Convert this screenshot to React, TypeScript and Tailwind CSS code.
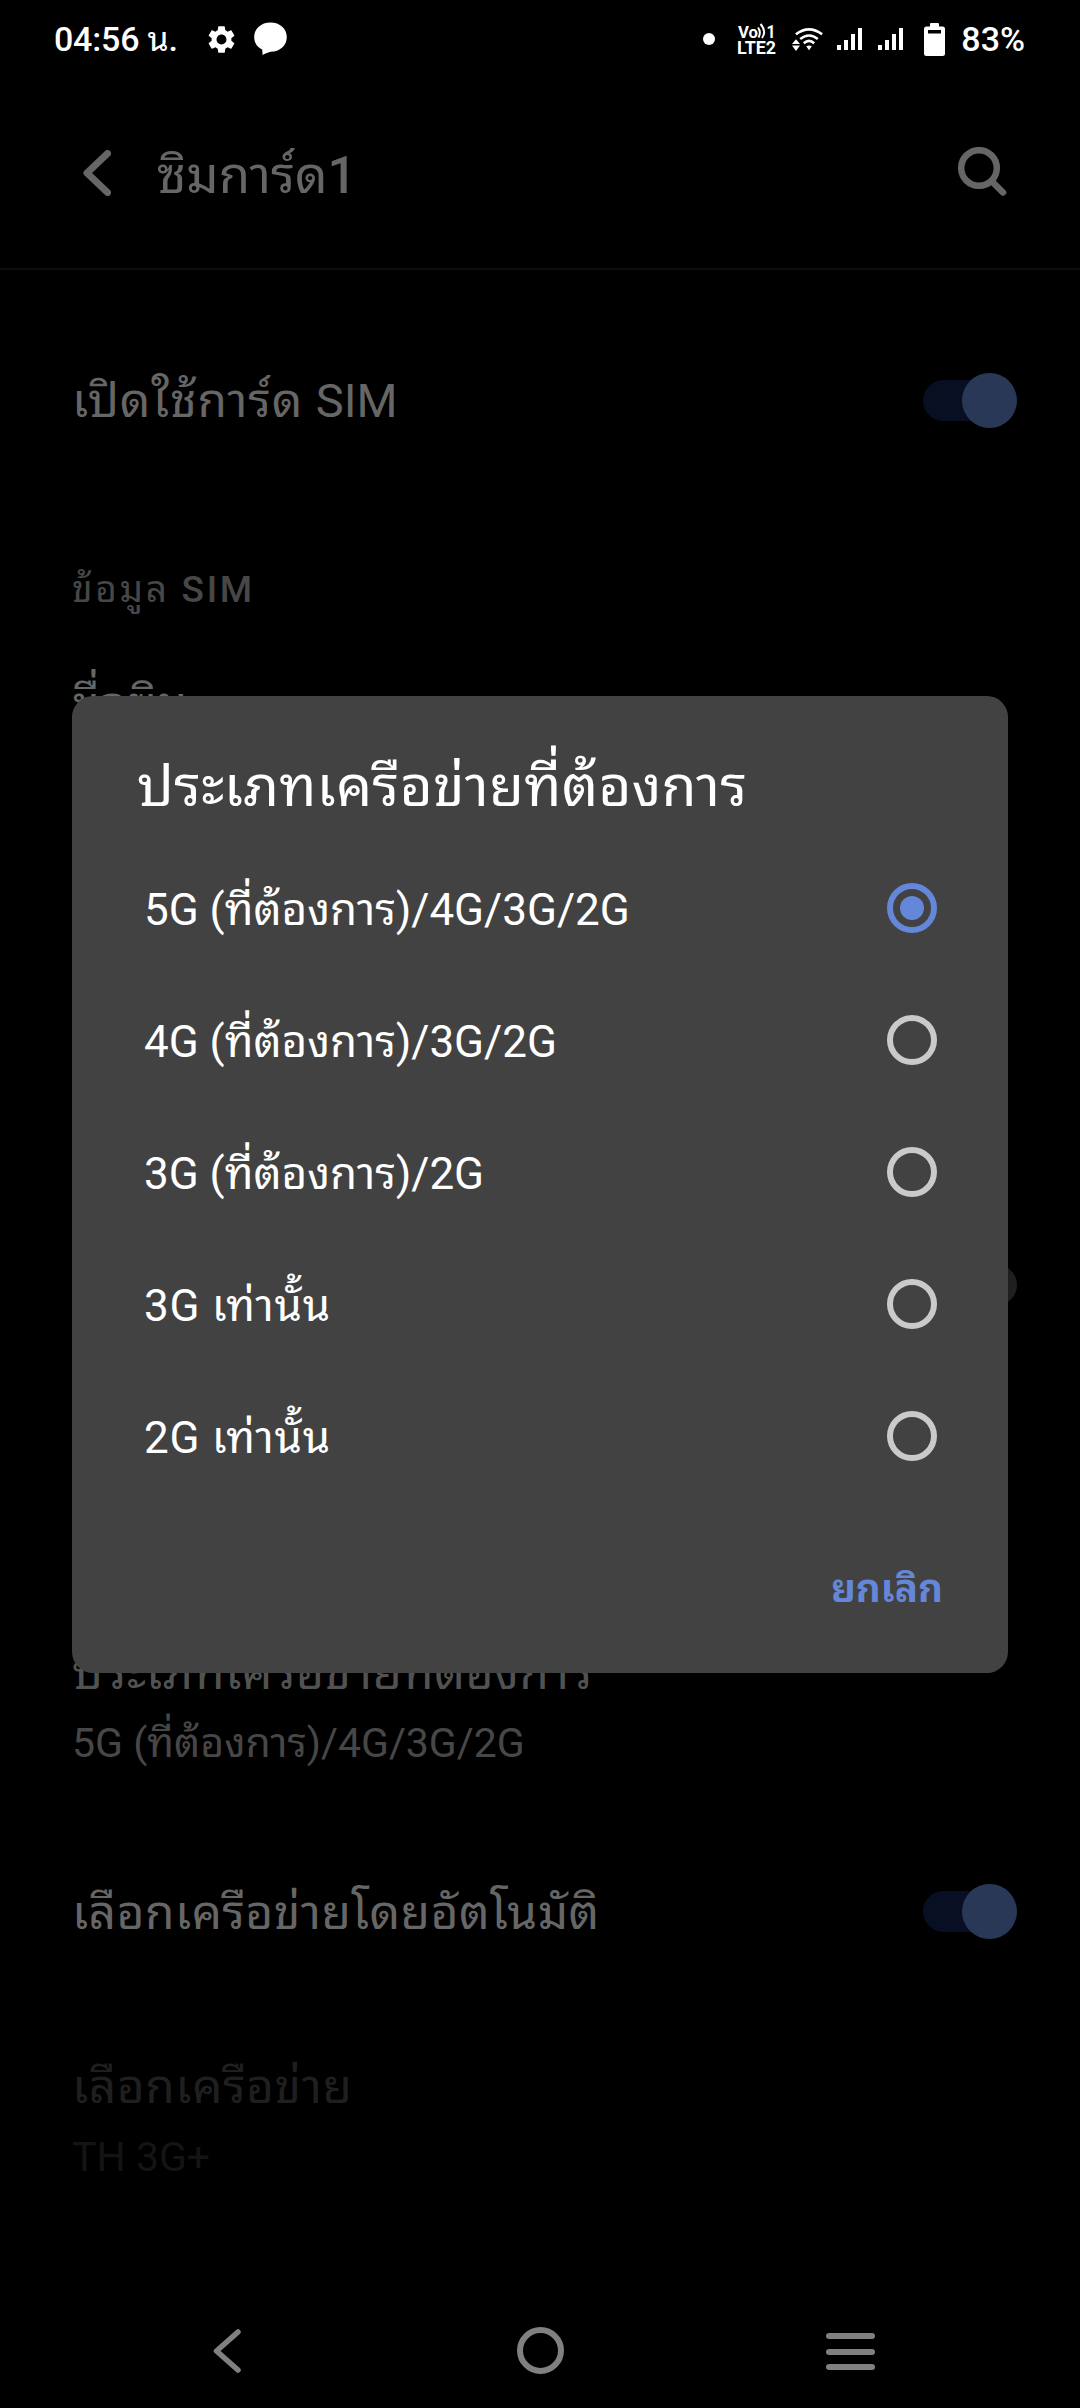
import type { ReactNode } from "react";
import { MdSettings } from "react-icons/md";

function SignalBars({ className }: { className: string }) {
  return (
    <svg width="25" height="22" viewBox="0 0 25 22" fill="white" className={className}>
      <rect x="0" y="17" width="4" height="5" />
      <rect x="7" y="12" width="4" height="10" />
      <rect x="14" y="6" width="4" height="16" />
      <rect x="21" y="0" width="4" height="22" />
    </svg>
  );
}

function VolteIcon({ className }: { className: string }) {
  return (
    <svg
      width="40"
      height="38"
      viewBox="0 0 40 38"
      fill="white"
      className={className}
      fontFamily="Roboto, sans-serif"
      fontWeight="700"
    >
      <text x="1" y="18" fontSize="16.5" textLength="20" lengthAdjust="spacingAndGlyphs">
        Vo
      </text>
      <path
        d="M21 7.5 Q24.5 12 21.5 17.5 M23.5 4 Q30 11 25 18"
        stroke="white"
        strokeWidth="2"
        fill="none"
      />
      <text x="29.5" y="18" fontSize="18" textLength="9" lengthAdjust="spacingAndGlyphs">
        1
      </text>
      <text x="0" y="34" fontSize="18" textLength="39" lengthAdjust="spacingAndGlyphs">
        LTE2
      </text>
    </svg>
  );
}

function WifiIcon({ className }: { className: string }) {
  return (
    <svg width="32" height="26" viewBox="0 0 32 26" fill="none" className={className}>
      <g stroke="white" strokeWidth="2.6">
        <path d="M4.9 8.2 Q18 -1.5 31.1 8.2" />
        <path d="M9.2 13 Q18 6 26.8 13" />
        <path d="M12.8 17.2 Q18 12.6 23.2 17.2" />
      </g>
      <path d="M15.2 20.2 Q18 18.6 20.8 20.2 L18 24.2Z" fill="white" />
      <path d="M1 18 L5 13.2 L9 18Z M1 19.6 H9 L5 25Z" fill="white" />
    </svg>
  );
}

function StatusBar() {
  return (
    <div className="flex h-[78px] shrink-0 items-center pl-[54px] pr-[55px] text-[34px] font-medium leading-none text-white">
      <div className="whitespace-pre tracking-[-0.2px]">
        04:56 <span className="font-normal">น</span>.
      </div>
      <MdSettings className="ml-[27px] size-[33px]" />
      <svg width="33" height="34" viewBox="0 0 33 34" fill="white" className="ml-[16px]">
        <path d="M16.5 0.5 C26 0.5 32.8 6.8 32.8 15 C32.8 23.5 26 29.8 16.5 29.8 C13.5 31 11 31.8 8.6 33 L8.2 27.5 C3 25 0.2 20.5 0.2 15 C0.2 6.8 7 0.5 16.5 0.5Z" />
      </svg>
      <span className="ml-auto size-3 rounded-full bg-white" />
      <VolteIcon className="ml-[22px]" />
      <WifiIcon className="ml-[14px]" />
      <SignalBars className="ml-[14px]" />
      <SignalBars className="ml-[16px]" />
      <svg width="21" height="33" viewBox="0 0 21 33" className="ml-[21px]">
        <rect x="6" y="0" width="9" height="5" rx="1" fill="white" />
        <rect x="0" y="3.5" width="21" height="29.5" rx="2.5" fill="white" />
        <rect x="4" y="7" width="13" height="3.5" fill="black" />
      </svg>
      <span className="ml-4">83%</span>
    </div>
  );
}

function Header() {
  return (
    <div className="flex h-[192px] shrink-0 items-center border-b-2 border-[#0d0d0d] pl-[83px] pr-[73px] text-[#666]">
      <svg width="28" height="46" viewBox="0 0 28 46" fill="none" stroke="#666" strokeWidth="7" strokeLinecap="round" strokeLinejoin="round">
        <path d="M24.5 3.5 L4 23 L24.5 42.5" />
      </svg>
      <div className="ml-[46px] pt-[4px] text-[51px] leading-none">
        ซิมการ์ด<span className="font-medium">1</span>
      </div>
      <svg width="49" height="49" viewBox="0 0 49 49" fill="none" stroke="#666" strokeWidth="6.5" strokeLinecap="round" className="mb-[3px] ml-auto">
        <circle cx="21" cy="21" r="17.8" />
        <path d="M34 34.5 L45 45.5" />
      </svg>
    </div>
  );
}

function Switch() {
  return (
    <div className="flex h-[41px] w-[94px] items-center justify-end rounded-full bg-[#080f22]">
      <div className="size-[55px] shrink-0 rounded-full bg-[#2a3858]" />
    </div>
  );
}

function Row({ className, children }: { className: string; children: ReactNode }) {
  return <div className={`flex shrink-0 items-center pl-[72px] pr-[63px] ${className}`}>{children}</div>;
}

const options = [
  { label: "5G (ที่ต้องการ)/4G/3G/2G", tracking: "tracking-[0px]" },
  { label: "4G (ที่ต้องการ)/3G/2G", tracking: "tracking-[0px]" },
  { label: "3G (ที่ต้องการ)/2G", tracking: "tracking-[0px]" },
  { label: "3G เท่านั้น", tracking: "tracking-[0.7px]" },
  { label: "2G เท่านั้น", tracking: "tracking-[0.7px]" },
];

function NetworkDialog() {
  return (
    <div className="absolute left-[72px] top-[696px] flex h-[977px] w-[936px] flex-col rounded-[21px] bg-[#424242] text-white">
      <div className="flex h-[146px] items-center pl-[65px] pt-[34px] text-[57px] leading-none tracking-[0.2px]">
        ประเภทเครือข่ายที่ต้องการ
      </div>
      {options.map(({ label, tracking }, i) => (
        <div key={label} className="flex h-[132px] items-center justify-between pl-[72px] pr-[71px]">
          <span className={`pt-[4px] text-[44px] leading-none ${tracking}`}>{label}</span>
          {i === 0 ? (
            <span className="flex size-[50px] items-center justify-center rounded-full border-6 border-[#6487d9]">
              <span className="size-6 rounded-full bg-[#6487d9]" />
            </span>
          ) : (
            <span className="size-[50px] rounded-full border-6 border-[#cacaca]" />
          )}
        </div>
      ))}
      <div className="flex flex-1 items-center justify-end pr-[65px] pt-[4px] text-[38.5px] font-bold leading-none text-[#6487d9]">
        ยกเลิก
      </div>
    </div>
  );
}

export default function App() {
  return (
    <div className="relative flex h-[2408px] w-[1080px] flex-col overflow-hidden bg-black font-[Roboto,'Noto_Sans_Thai_Looped',sans-serif] text-[48px] leading-none text-[#666]">
      <StatusBar />
      <Header />
      <Row className="h-[260px] justify-between">
        <span className="pt-[2px]">
          <span className="tracking-[0.8px]">เปิดใช้การ์ด </span>
          <span className="text-[47px]">SIM</span>
        </span>
        <Switch />
      </Row>
      <Row className="h-[119px] whitespace-pre text-[37px] tracking-[2.7px] text-[#474747]">
        ข้อมูล <span className="font-medium">SIM</span>
      </Row>
      <Row className="h-[107px] pt-[2px] tracking-[0.8px]">ชื่อซิม</Row>
      <Row className="mt-[475px] h-[107px] justify-end">
        <div className="size-10 rounded-full bg-[#1f1f1f]" />
      </Row>
      <Row className="mt-[303px] h-[64px] tracking-[0.5px] text-[#525252]">ประเภทเครือข่ายที่ต้องการ</Row>
      <Row className="h-[76px] text-[41px] text-[#474747]">5G (ที่ต้องการ)/4G/3G/2G</Row>
      <Row className="h-[261px] justify-between">
        <span className="pt-[2px] tracking-[0.4px]">เลือกเครือข่ายโดยอัตโนมัติ</span>
        <Switch />
      </Row>
      <Row className="h-[90px] tracking-[0.5px] text-[#1f1f1f]">เลือกเครือข่าย</Row>
      <Row className="h-[50px] text-[41px] text-[#141414]">TH 3G+</Row>
      <div className="mt-auto flex h-[115px] shrink-0 items-center pl-[213px]">
        <svg width="28" height="44" viewBox="0 0 28 44" fill="none" stroke="#808080" strokeWidth="5.5" strokeLinecap="round" strokeLinejoin="round">
          <path d="M25 3 L3.5 22 L25 41" />
        </svg>
        <div className="ml-[276px] size-[47px] rounded-full border-6 border-[#808080]" />
        <div className="ml-[262px] flex w-[49px] flex-col gap-[9.5px] pt-[2px]">
          <div className="h-1.5 rounded-sm bg-[#808080]" />
          <div className="h-1.5 rounded-sm bg-[#808080]" />
          <div className="h-1.5 rounded-sm bg-[#808080]" />
        </div>
      </div>
      <NetworkDialog />
    </div>
  );
}
